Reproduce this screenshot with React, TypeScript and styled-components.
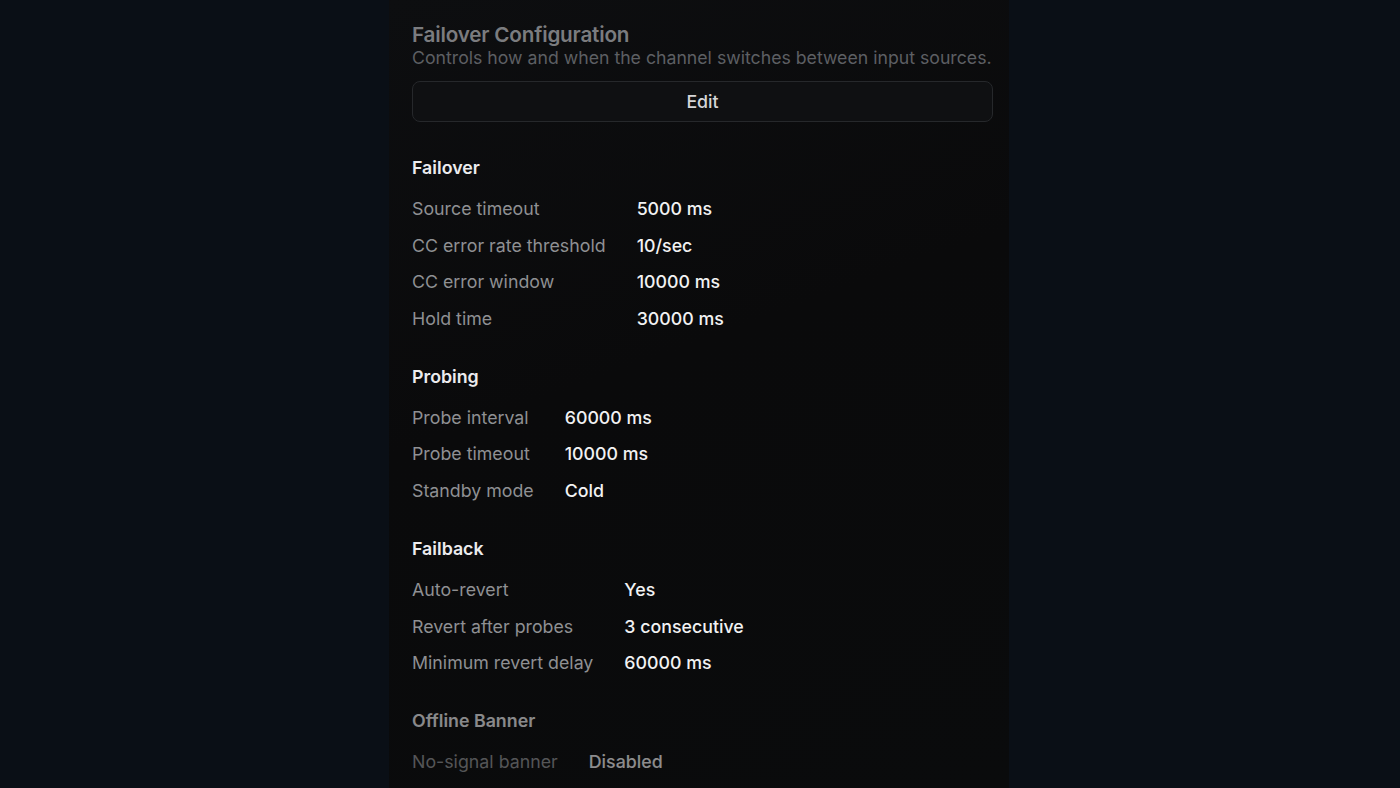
import styled, { createGlobalStyle } from "styled-components";
import { Fragment } from "react";

const GlobalStyle = createGlobalStyle`
  html, body {
    margin: 0;
    padding: 0;
    background: #0a0f16;
  }
  body {
    font-family: Inter, "Noto Sans", sans-serif;
    -webkit-font-smoothing: antialiased;
  }
`;

interface Setting {
  label: string;
  value: string;
}

interface Section {
  title: string;
  rows: Setting[];
  dimmed?: boolean;
}

const SECTIONS: Section[] = [
  {
    title: "Failover",
    rows: [
      { label: "Source timeout", value: "5000 ms" },
      { label: "CC error rate threshold", value: "10/sec" },
      { label: "CC error window", value: "10000 ms" },
      { label: "Hold time", value: "30000 ms" },
    ],
  },
  {
    title: "Probing",
    rows: [
      { label: "Probe interval", value: "60000 ms" },
      { label: "Probe timeout", value: "10000 ms" },
      { label: "Standby mode", value: "Cold" },
    ],
  },
  {
    title: "Failback",
    rows: [
      { label: "Auto-revert", value: "Yes" },
      { label: "Revert after probes", value: "3 consecutive" },
      { label: "Minimum revert delay", value: "60000 ms" },
    ],
  },
  {
    title: "Offline Banner",
    dimmed: true,
    rows: [{ label: "No-signal banner", value: "Disabled" }],
  },
];

const Page = styled.div`
  display: flex;
  justify-content: center;
  height: 788px;
  overflow: hidden;
`;

const Panel = styled.div`
  width: 620px;
  margin-left: -2px;
  box-sizing: border-box;
  padding: 23px 16px 0 23px;
  background: linear-gradient(160deg, #0d0e10 0%, #0a0a0b 45%, #0a0b0c 100%);
  display: flex;
  flex-direction: column;
`;

const Header = styled.div`
  display: flex;
  flex-direction: column;
`;

const Title = styled.h2`
  margin: 0;
  font-size: 20.7px;
  line-height: 24px;
  font-weight: 600;
  color: #7b7c7f;
  letter-spacing: -0.2px;
`;

const Subtitle = styled.p`
  margin: 0;
  font-size: 17.7px;
  line-height: 22px;
  color: #5d5f63;
  white-space: nowrap;
`;

const EditButton = styled.button`
  margin-top: 12px;
  height: 41px;
  width: 100%;
  border: 1px solid #26282b;
  border-radius: 8px;
  background: #0f1012;
  color: #d6d6d8;
  font-family: inherit;
  font-size: 17.8px;
  font-weight: 500;
  cursor: pointer;
`;

const Sections = styled.div`
  display: flex;
  flex-direction: column;
  gap: 36px;
  margin-top: 35px;
`;

const Group = styled.section<{ $dimmed?: boolean }>`
  display: flex;
  flex-direction: column;
  gap: 19px;
  opacity: ${(p) => (p.$dimmed ? 0.56 : 1)};
`;

const GroupTitle = styled.h3`
  margin: 0;
  font-size: 17.8px;
  line-height: 22px;
  font-weight: 600;
  color: #ececee;
`;

const Grid = styled.dl`
  margin: 0;
  display: grid;
  grid-template-columns: max-content 1fr;
  column-gap: 31px;
  row-gap: 14.6px;
`;

const Label = styled.dt`
  font-size: 17.8px;
  line-height: 22px;
  color: #8f9093;
`;

const Value = styled.dd`
  margin: 0;
  font-size: 17.8px;
  line-height: 22px;
  font-weight: 500;
  color: #f2f2f3;
`;

export default function App() {
  return (
    <>
      <GlobalStyle />
      <Page>
        <Panel>
          <Header>
            <Title>Failover Configuration</Title>
            <Subtitle>
              Controls how and when the channel switches between input sources.
            </Subtitle>
          </Header>
          <EditButton>Edit</EditButton>
          <Sections>
            {SECTIONS.map((section) => (
              <Group key={section.title} $dimmed={section.dimmed}>
                <GroupTitle>{section.title}</GroupTitle>
                <Grid>
                  {section.rows.map((row) => (
                    <Fragment key={row.label}>
                      <Label>{row.label}</Label>
                      <Value>{row.value}</Value>
                    </Fragment>
                  ))}
                </Grid>
              </Group>
            ))}
          </Sections>
        </Panel>
      </Page>
    </>
  );
}
